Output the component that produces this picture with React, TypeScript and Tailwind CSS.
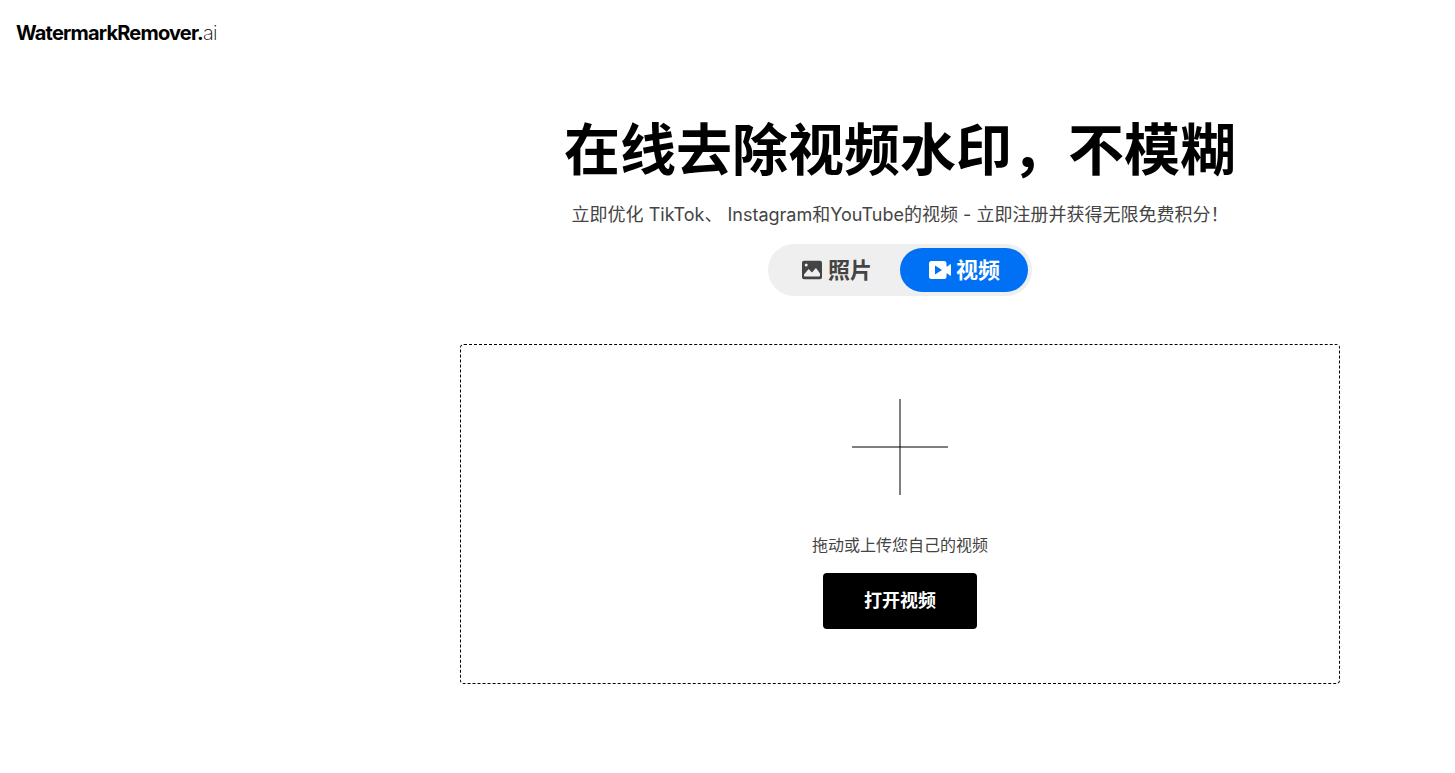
import React, { useRef, useState } from 'react';

type Mode = 'photo' | 'video';

interface ModeTabProps {
  label: string;
  active: boolean;
  icon: React.ReactNode;
  onClick: () => void;
}

const PhotoIcon = () => (
  <svg viewBox="0 0 24 24" className="size-6" fill="currentColor" aria-hidden="true">
    <path
      fillRule="evenodd"
      d="M4 2.7h16a2 2 0 0 1 2 2v14.6a2 2 0 0 1-2 2H4a2 2 0 0 1-2-2V4.7a2 2 0 0 1 2-2ZM4 16.500v1c0 .6.400 1 1 1h14c.6 0 1-.4 1-1v-2l-3.500-4.800c-.4-.5-.9-.5-1.300 0L12 14.500 9.300 11.700c-.4-.5-.9-.5-1.300 0L4 16.500ZM6.200 8.400a1.500 1.500 0 1 0 0-3 1.500 1.500 0 0 0 0 3Z"
    />
  </svg>
);

const VideoIcon = () => (
  <svg viewBox="0 0 24 24" className="size-6" fill="currentColor" aria-hidden="true">
    <path
      fillRule="evenodd"
      d="M3.500 3h12.500a2.500 2.500 0 0 1 2.500 2.500V8.500h1L22 6.300a.6.6 0 0 1 1 .4v10.600a.6.6 0 0 1-1 .4L19.500 15.500h-1v3A2.500 2.500 0 0 1 16 21H3.500A2.500 2.500 0 0 1 1 18.500v-13A2.500 2.500 0 0 1 3.500 3ZM7 7.500v9l7-4.500-7-4.500Z"
    />
  </svg>
);

const ModeTab: React.FC<ModeTabProps> = ({ label, active, icon, onClick }) => (
  <button
    type="button"
    aria-pressed={active}
    onClick={onClick}
    className={`flex h-11 w-32 items-center justify-center gap-1 rounded-full text-[22px] font-bold ${
      active ? 'bg-[#0071f5] text-white' : 'text-[#444444]'
    }`}
  >
    {icon}
    {label}
  </button>
);

export default function App() {
  const [mode, setMode] = useState<Mode>('video');
  const inputRef = useRef<HTMLInputElement>(null);

  return (
    <div className="min-h-screen bg-white font-['Inter','Noto_Sans_CJK_SC',sans-serif] text-black" lang="zh-CN">
      <header className="flex h-[66px] items-center px-4">
        <a href="/" className="text-xl font-bold tracking-[-0.04em]">
          WatermarkRemover.<span className="font-extralight">ai</span>
        </a>
      </header>

      <main className="flex flex-col items-center px-4 pt-12 pb-20 lg:pr-0 lg:pl-[345px]">
        <h1 className="text-center text-[56px] leading-[72px] font-bold">在线去除视频水印，不模糊</h1>
        <p className="mt-[15px] text-center text-lg leading-7 text-[#444444]">
          立即优化 TikTok、 Instagram和YouTube的视频 - 立即注册并获得无限免费积分！
        </p>

        <div className="mt-[15px] flex rounded-full bg-[#efefef] p-1">
          <ModeTab label="照片" icon={<PhotoIcon />} active={mode === 'photo'} onClick={() => setMode('photo')} />
          <ModeTab label="视频" icon={<VideoIcon />} active={mode === 'video'} onClick={() => setMode('video')} />
        </div>

        <section className="mt-12 flex w-full max-w-[880px] flex-col items-center rounded border border-dashed border-black py-[54px]">
          <svg viewBox="0 0 96 96" className="size-24" stroke="black" strokeOpacity="0.5" strokeWidth="2" aria-hidden="true">
            <path d="M48 0v96" />
            <path d="M0 48h96" />
          </svg>
          <label htmlFor="media" className="mt-[38px] leading-6 text-[#444444]">
            拖动或上传您自己的视频
          </label>
          <input ref={inputRef} id="media" type="file" accept="video/*" className="hidden" />
          <button
            type="button"
            onClick={() => inputRef.current?.click()}
            className="mt-4 h-14 rounded bg-black px-[41px] text-lg font-bold text-white"
          >
            打开视频
          </button>
        </section>
      </main>
    </div>
  );
}
